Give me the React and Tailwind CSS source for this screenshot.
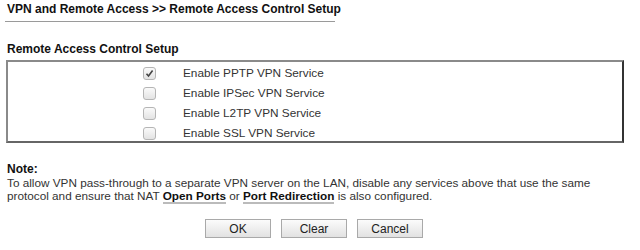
export default function App() {
  const rows = [
    { label: "Enable PPTP VPN Service", checked: true },
    { label: "Enable IPSec VPN Service", checked: false },
    { label: "Enable L2TP VPN Service", checked: false },
    { label: "Enable SSL VPN Service", checked: false },
  ];
  return (
    <div className="w-[640px] h-[250px] bg-white font-['Liberation_Sans',Arial,sans-serif] text-[#222] overflow-hidden">
      <div className="pt-[2px] pl-[7px] text-[12px] font-bold leading-[15px] text-[#111]">
        VPN and Remote Access &gt;&gt; Remote Access Control Setup
      </div>
      <div className="ml-[5px] mt-[4px] w-[330px] h-px bg-[#9a9a9a]" />
      <div className="pl-[7px] mt-[20px] text-[12px] font-bold leading-[14px] text-[#111]">
        Remote Access Control Setup
      </div>
      <div className="ml-[6px] mt-[4px] w-[618px] h-[83px] border-2 border-t-[#8a8a8a] border-l-[#8a8a8a] border-r-[#333] border-b-[#666] py-[1px]">
        {rows.map((r) => (
          <div key={r.label} className="flex items-center h-[20px]">
            <div className="w-[135px]" />
            <div className="w-[13px] h-[13px] rounded-[3px] border border-[#b5b5b5] bg-gradient-to-b from-[#fafafa] to-[#e3e3e3] flex items-center justify-center">
              {r.checked && (
                <svg width="9" height="9" viewBox="0 0 9 9">
                  <path d="M1.5 4.8 L3.5 7 L7.6 1.6" fill="none" stroke="#444" strokeWidth="1.6" />
                </svg>
              )}
            </div>
            <div className="ml-[27px] text-[11.8px] leading-[14px] text-[#333]">{r.label}</div>
          </div>
        ))}
      </div>
      <div className="pl-[7px] mt-[19px] text-[12px] font-bold leading-[14px] text-[#111]">Note:</div>
      <div className="pl-[7px] text-[11.75px] leading-[13px] text-[#333]">
        To allow VPN pass-through to a separate VPN server on the LAN, disable any services above that use the same
        <br />
        protocol and ensure that NAT{" "}
        <span className="font-bold text-[#111] border-b-2 border-[#bbb]">Open Ports</span> or{" "}
        <span className="font-bold text-[#111] border-b-2 border-[#bbb]">Port Redirection</span> is also configured.
      </div>
      <div className="flex gap-[10px] mt-[17px] ml-[205px]">
        {["OK", "Clear", "Cancel"].map((b) => (
          <button
            key={b}
            className="w-[66px] h-[19px] border border-[#a9a9a9] bg-gradient-to-b from-[#fbfbfb] to-[#e2e2e2] text-[12px] leading-[14px] text-[#222] font-['Liberation_Sans',Arial,sans-serif]"
          >
            {b}
          </button>
        ))}
      </div>
    </div>
  );
}
